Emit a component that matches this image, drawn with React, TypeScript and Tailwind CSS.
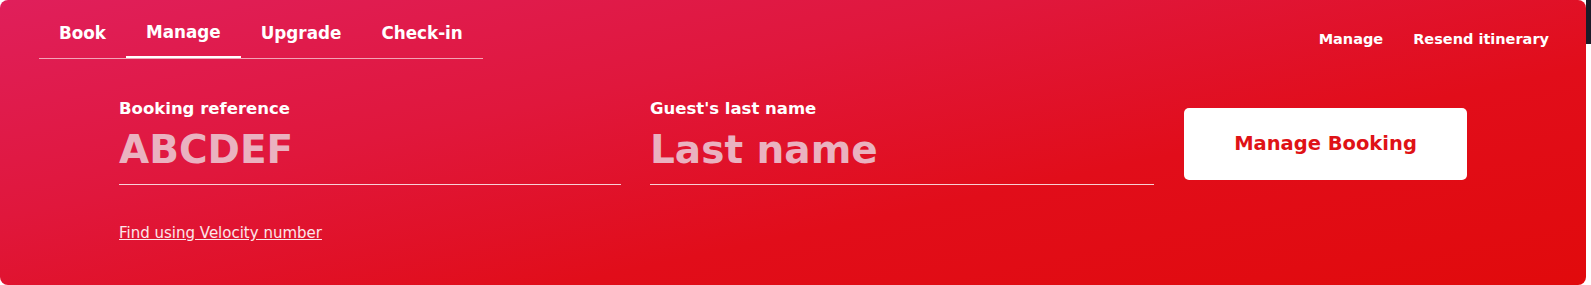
import React from "react";

const tabs = ["Book", "Manage", "Upgrade", "Check-in"];

const App = () => {
  return (
    <div className="w-[1591px] h-[285px] bg-white flex">
      <div className="relative w-[1586px] h-[285px] rounded-[8px] bg-[linear-gradient(168deg,#e01f5b_0%,#e0173c_35%,#e10d1a_65%,#e10a0c_100%)] text-white font-['DejaVu_Sans',sans-serif]">
        <div className="flex justify-between">
          <div className="ml-[39px] flex border-b border-white/60 mt-[10px]">
            {tabs.map((t) => (
              <div
                key={t}
                className={`px-5 h-[48px] flex items-center text-[16.8px] font-bold ${
                  t === "Manage" ? "border-b-2 border-white -mb-[1px]" : ""
                }`}
              >
                {t}
              </div>
            ))}
          </div>
          <div className="flex gap-[30px] mr-[37px] mt-[29px] text-[14.5px] font-bold">
            <span>Manage</span>
            <span>Resend itinerary</span>
          </div>
        </div>

        <div className="flex items-start ml-[119px] mt-[40px]">
          <div className="w-[502px]">
            <div className="text-[16.5px] font-bold leading-[20px]">Booking reference</div>
            <div className="mt-[10px] h-[56px] border-b border-white/80 text-[39px] font-bold leading-[42px] text-[#eab2c0]">
              ABCDEF
            </div>
          </div>
          <div className="w-[504px] ml-[29px]">
            <div className="text-[16.5px] font-bold leading-[20px]">Guest's last name</div>
            <div className="mt-[10px] h-[56px] border-b border-white/80 text-[39px] font-bold leading-[42px] text-[#eab2c0]">
              Last name
            </div>
          </div>
          <button className="ml-[30px] mt-[9px] w-[283px] h-[72px] rounded-[5px] bg-white text-[#df1216] text-[19.5px] font-bold flex items-center justify-center">
            Manage Booking
          </button>
        </div>

        <a className="block ml-[119px] mt-[37px] text-[15px] underline text-white/90 w-fit">
          Find using Velocity number
        </a>
      </div>
      <div className="w-[5px] flex flex-col">
        <div className="h-[44px] bg-[#1b1b28]" />
      </div>
    </div>
  );
};

export default App;
